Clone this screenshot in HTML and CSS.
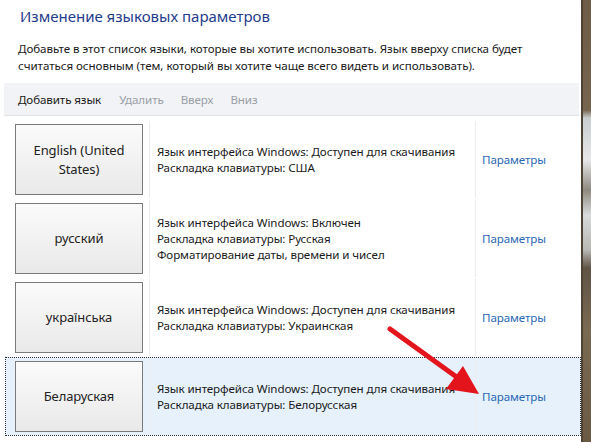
FILE: index.html
```html
<!DOCTYPE html>
<html lang="ru">
<head>
<meta charset="utf-8">
<title>Изменение языковых параметров</title>
<link rel="stylesheet" href="styles.css">
</head>
<body>
<div class="screen">
  <div class="window">
    <h1 class="title">Изменение языковых параметров</h1>
    <p class="desc">Добавьте в этот список языки, которые вы хотите использовать. Язык вверху списка будет считаться основным (тем, который вы хотите чаще всего видеть и использовать).</p>
    <div class="toolbar">
      <span class="tool active">Добавить язык</span>
      <span class="tool">Удалить</span>
      <span class="tool">Вверх</span>
      <span class="tool">Вниз</span>
    </div>
    <div class="list">
      <div class="row">
        <div class="c-lang"><div class="lang-btn">English (United<br>States)</div></div>
        <div class="c-info">
          <div>Язык интерфейса Windows: Доступен для скачивания</div>
          <div>Раскладка клавиатуры: США</div>
        </div>
        <div class="c-link"><a class="link">Параметры</a></div>
      </div>
      <div class="row">
        <div class="c-lang"><div class="lang-btn">русский</div></div>
        <div class="c-info">
          <div>Язык интерфейса Windows: Включен</div>
          <div>Раскладка клавиатуры: Русская</div>
          <div>Форматирование даты, времени и чисел</div>
        </div>
        <div class="c-link"><a class="link">Параметры</a></div>
      </div>
      <div class="row">
        <div class="c-lang"><div class="lang-btn">українська</div></div>
        <div class="c-info">
          <div>Язык интерфейса Windows: Доступен для скачивания</div>
          <div>Раскладка клавиатуры: Украинская</div>
        </div>
        <div class="c-link"><a class="link">Параметры</a></div>
      </div>
      <div class="row selected">
        <div class="c-lang"><div class="lang-btn">Беларуская</div></div>
        <div class="c-info">
          <div>Язык интерфейса Windows: Доступен для скачивания</div>
          <div>Раскладка клавиатуры: Белорусская</div>
        </div>
        <div class="c-link"><a class="link">Параметры</a></div>
      </div>
    </div>
    <svg class="arrow" width="120" height="90" viewBox="0 0 120 90">
      <line x1="4" y1="6" x2="72" y2="55" stroke="#e3141c" stroke-width="5" stroke-linecap="round"/>
      <polygon points="93,71 60,66 77,43" fill="#e3141c"/>
    </svg>
  </div>
  <div class="edge"></div>
</div>
</body>
</html>
```

FILE: styles.css
```css
html, body {
  margin: 0;
  padding: 0;
  background: #fff;
}
.screen {
  display: flex;
  width: 591px;
  height: 442px;
  overflow: hidden;
  font-family: "Noto Sans", "Open Sans", sans-serif;
  color: #1a1a1a;
}
.window {
  position: relative;
  width: 582px;
  background: #fff;
}
.title {
  margin: 0;
  padding: 5px 0 0 20px;
  font-size: 15px;
  font-weight: normal;
  color: #1f3c8c;
  letter-spacing: 0;
  line-height: 22px;
}
.desc {
  margin: 13px 0 0 18px;
  width: 520px;
  font-size: 11.6px;
  line-height: 17px;
  letter-spacing: -0.05px;
}
.toolbar {
  margin: 9px 2px 0 4px;
  height: 32px;
  background: #f1f3f6;
  border-bottom: 1px solid #e2e5e8;
  display: flex;
  align-items: center;
  font-size: 11.6px;
  letter-spacing: -0.1px;
}
.tool {
  color: #9a9fa6;
  margin-right: 17px;
}
.tool.active {
  color: #1a1a1a;
  margin-left: 14px;
  margin-right: 18px;
}
.list {
  margin-top: 4px;
  margin-left: 5px;
  width: 576px;
}
.row {
  display: flex;
  height: 79px;
  font-size: 11.6px;
  letter-spacing: -0.1px;
  line-height: 16px;
  border: 1px dotted transparent;
  box-sizing: border-box;
}
.row.selected {
  background: #e6f1fc;
  border: 1px dotted #333;
}
.c-lang {
  width: 144px;
  flex: none;
  padding: 3px 0 0 9px;
  box-sizing: border-box;
  border-right: 1px solid #ebedf0;
}
.lang-btn {
  width: 128px;
  height: 71px;
  box-sizing: border-box;
  border: 1px solid #7a7a7a;
  background: linear-gradient(#fbfbfb, #f1f1f1 55%, #e9e9e9);
  display: flex;
  align-items: center;
  justify-content: center;
  text-align: center;
  font-size: 13px;
  line-height: 19px;
  color: #222;
}
.c-info {
  width: 326px;
  flex: none;
  padding-left: 7px;
  box-sizing: border-box;
  display: flex;
  flex-direction: column;
  justify-content: center;
  border-right: 1px solid #ebedf0;
}
.c-link {
  flex: 1;
  display: flex;
  align-items: center;
  padding-left: 6px;
}
.link {
  color: #2a68b4;
  font-size: 11.6px;
}
.arrow {
  position: absolute;
  left: 386px;
  top: 323px;
}
.edge {
  width: 9px;
  background: linear-gradient(180deg, #6e5c46 0, #76654e 110px, #c9cdd0 118px, #e6e7e8 160px, #8f8a80 190px, #d8dadb 215px, #b8b8b4 250px, #5f5345 268px, #7a6a52 330px, #6a5a44 442px);
  border-left: 2px solid #4e4334;
}
```
